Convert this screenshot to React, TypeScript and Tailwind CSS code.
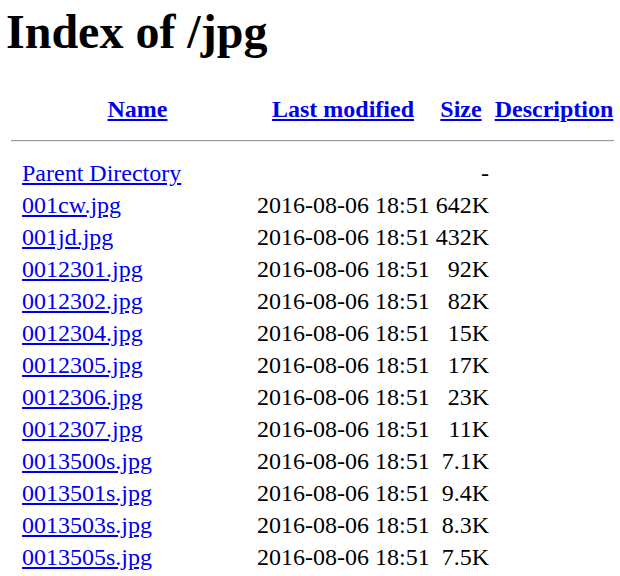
const files: [string, string][] = [
  ["001cw.jpg", "642K"],
  ["001jd.jpg", "432K"],
  ["0012301.jpg", "92K"],
  ["0012302.jpg", "82K"],
  ["0012304.jpg", "15K"],
  ["0012305.jpg", "17K"],
  ["0012306.jpg", "23K"],
  ["0012307.jpg", "11K"],
  ["0013500s.jpg", "7.1K"],
  ["0013501s.jpg", "9.4K"],
  ["0013503s.jpg", "8.3K"],
  ["0013505s.jpg", "7.5K"],
];

const row =
  "grid grid-cols-[231px_172px_56px_122px] gap-x-[4px] pl-[22px] text-[24px] leading-[32px] whitespace-nowrap";
const link = "text-[#0000ee] underline";

export default function App() {
  return (
    <div className="h-screen overflow-hidden bg-white text-black font-['Liberation_Serif','Times_New_Roman',serif]">
      <h1 className="pl-[6px] pt-[4px] text-[48px] font-bold leading-[55px]">
        Index of /jpg
      </h1>

      <div className={`${row} mt-[34px] font-bold`}>
        <div className="text-center">
          <a href="#" className={link}>Name</a>
        </div>
        <div className="text-center">
          <a href="#" className={link}>Last modified</a>
        </div>
        <div className="text-center">
          <a href="#" className={link}>Size</a>
        </div>
        <div className="text-center">
          <a href="#" className={link}>Description</a>
        </div>
      </div>

      <div className="py-[15px] pl-[11px]">
        <hr className="w-[603px] border-0 border-t border-b border-t-[#9a9a9a] border-b-[#eeeeee]" />
      </div>

      <div className={row}>
        <div>
          <a href="#" className={link}>Parent Directory</a>
        </div>
        <div />
        <div className="text-right">-</div>
        <div />
      </div>

      {files.map(([name, size]) => (
        <div key={name} className={row}>
          <div>
            <a href="#" className={link}>{name}</a>
          </div>
          <div>2016-08-06 18:51</div>
          <div className="text-right">{size}</div>
          <div />
        </div>
      ))}
    </div>
  );
}
